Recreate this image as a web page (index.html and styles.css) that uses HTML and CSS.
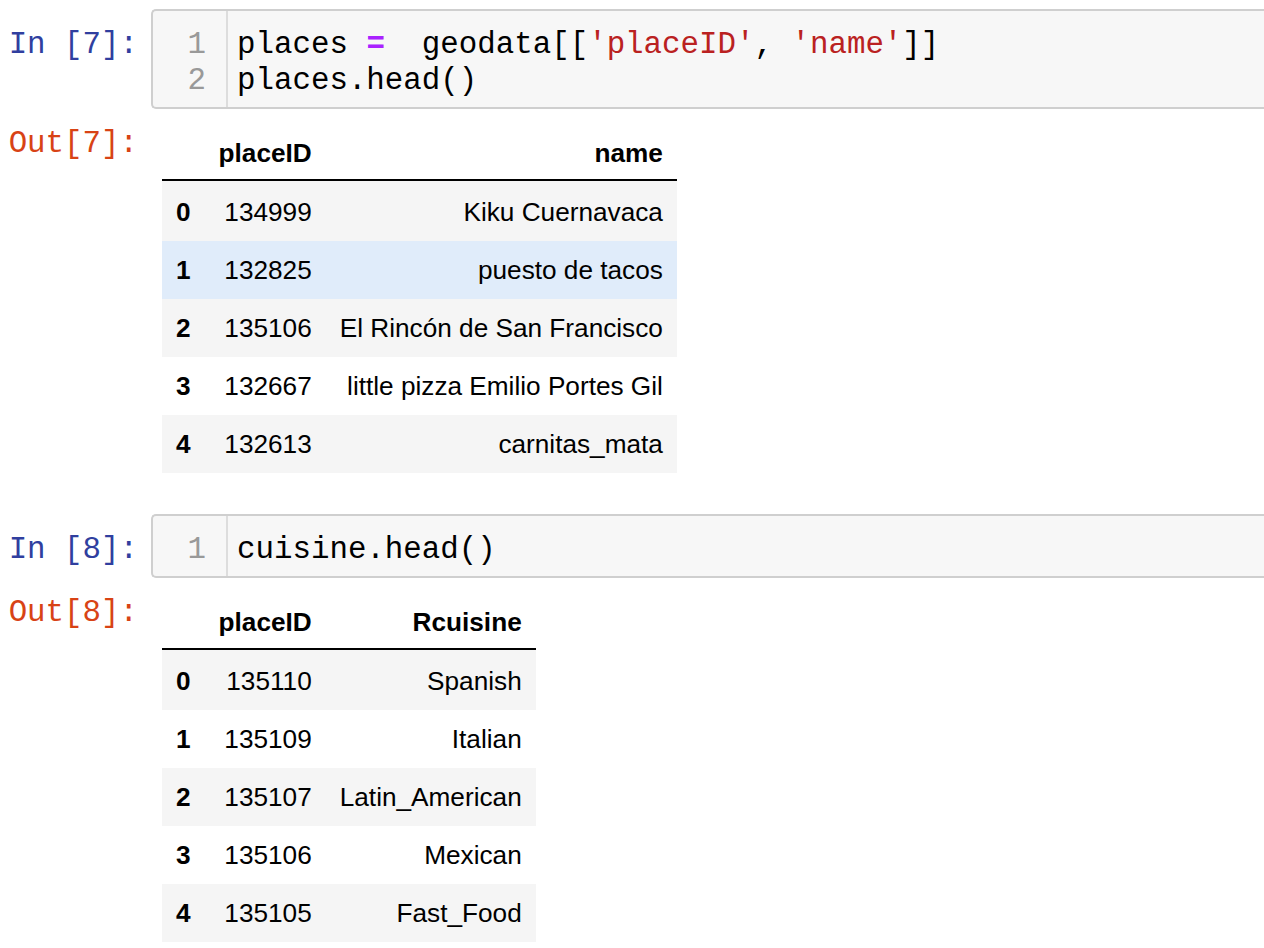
FILE: index.html
```html
<!DOCTYPE html>
<html>
<head>
<meta charset="utf-8">
<link rel="stylesheet" href="styles.css">
</head>
<body>
<div class="notebook">
  <div class="cell">
    <div class="row input-row">
      <div class="prompt in-prompt">In&nbsp;[7]:</div>
      <div class="input-box">
        <div class="gutter"><div>1</div><div>2</div></div>
        <div class="code"><div><span>places </span><span class="op">=</span><span>  geodata[[</span><span class="str">'placeID'</span><span>, </span><span class="str">'name'</span><span>]]</span></div><div>places.head()</div></div>
      </div>
    </div>
    <div class="row output-row">
      <div class="prompt out-prompt">Out[7]:</div>
      <div class="output">
        <table class="df">
          <thead>
            <tr><th></th><th>placeID</th><th>name</th></tr>
          </thead>
          <tbody>
            <tr><th>0</th><td>134999</td><td>Kiku Cuernavaca</td></tr>
            <tr class="hover"><th>1</th><td>132825</td><td>puesto de tacos</td></tr>
            <tr><th>2</th><td>135106</td><td>El Rincón de San Francisco</td></tr>
            <tr><th>3</th><td>132667</td><td>little pizza Emilio Portes Gil</td></tr>
            <tr><th>4</th><td>132613</td><td>carnitas_mata</td></tr>
          </tbody>
        </table>
      </div>
    </div>
  </div>

  <div class="cell">
    <div class="row input-row">
      <div class="prompt in-prompt">In&nbsp;[8]:</div>
      <div class="input-box">
        <div class="gutter"><div>1</div></div>
        <div class="code"><div>cuisine.head()</div></div>
      </div>
    </div>
    <div class="row output-row">
      <div class="prompt out-prompt">Out[8]:</div>
      <div class="output">
        <table class="df">
          <thead>
            <tr><th></th><th>placeID</th><th>Rcuisine</th></tr>
          </thead>
          <tbody>
            <tr><th>0</th><td>135110</td><td>Spanish</td></tr>
            <tr><th>1</th><td>135109</td><td>Italian</td></tr>
            <tr><th>2</th><td>135107</td><td>Latin_American</td></tr>
            <tr><th>3</th><td>135106</td><td>Mexican</td></tr>
            <tr><th>4</th><td>135105</td><td>Fast_Food</td></tr>
          </tbody>
        </table>
      </div>
    </div>
  </div>
</div>
</body>
</html>
```

FILE: styles.css
```css
html, body {
  margin: 0;
  padding: 0;
  background: #ffffff;
}

.notebook {
  padding-top: 9px;
  overflow: hidden;
}

.cell {
  margin-bottom: 41px;
}

.row {
  display: flex;
  align-items: flex-start;
}

.prompt {
  flex: 0 0 138px;
  text-align: right;
  font-family: "Liberation Mono", monospace;
  font-size: 30.8px;
  line-height: 36px;
  white-space: nowrap;
}

.in-prompt {
  color: #303f9f;
  padding-top: 18px;
  margin-right: 13px;
}

.out-prompt {
  color: #d84315;
  padding-top: 9px;
  margin-right: 13px;
}

.input-box {
  flex: 1 1 auto;
  display: flex;
  background: #f7f7f7;
  border: 2px solid #cfcfcf;
  border-right: none;
  border-radius: 5px 0 0 5px;
  margin-right: -4px;
}

.gutter {
  width: 75px;
  box-sizing: border-box;
  border-right: 2px solid #dddddd;
  text-align: right;
  padding: 16px 20px 8px 0;
  color: #999999;
  font-family: "Liberation Mono", monospace;
  font-size: 30.8px;
  line-height: 36px;
}

.code {
  padding: 16px 0 8px 9px;
  color: #000000;
  font-family: "Liberation Mono", monospace;
  font-size: 30.8px;
  line-height: 36px;
  white-space: pre;
}

.op {
  color: #aa22ff;
  font-weight: bold;
}

.str {
  color: #ba2121;
}

.output-row {
  margin-top: 8px;
}

.output {
  padding-left: 11px;
  padding-top: 7px;
}

.df {
  border-collapse: collapse;
  border-spacing: 0;
  font-family: "Liberation Sans", Arial, sans-serif;
  font-size: 26.2px;
  line-height: 32px;
  color: #000000;
}

.df th,
.df td {
  padding: 13px 14px;
  text-align: right;
  vertical-align: middle;
  white-space: nowrap;
}

.df thead th {
  padding-top: 13px;
  padding-bottom: 10px;
}

.df tbody tr:first-child th,
.df tbody tr:first-child td {
  padding-top: 15px;
}

.df th {
  font-weight: bold;
}

.df thead tr {
  border-bottom: 2px solid #000000;
}

.df tbody tr:nth-child(odd) {
  background: #f5f5f5;
}

.df tbody tr.hover {
  background: #e0ecfa;
}
```
